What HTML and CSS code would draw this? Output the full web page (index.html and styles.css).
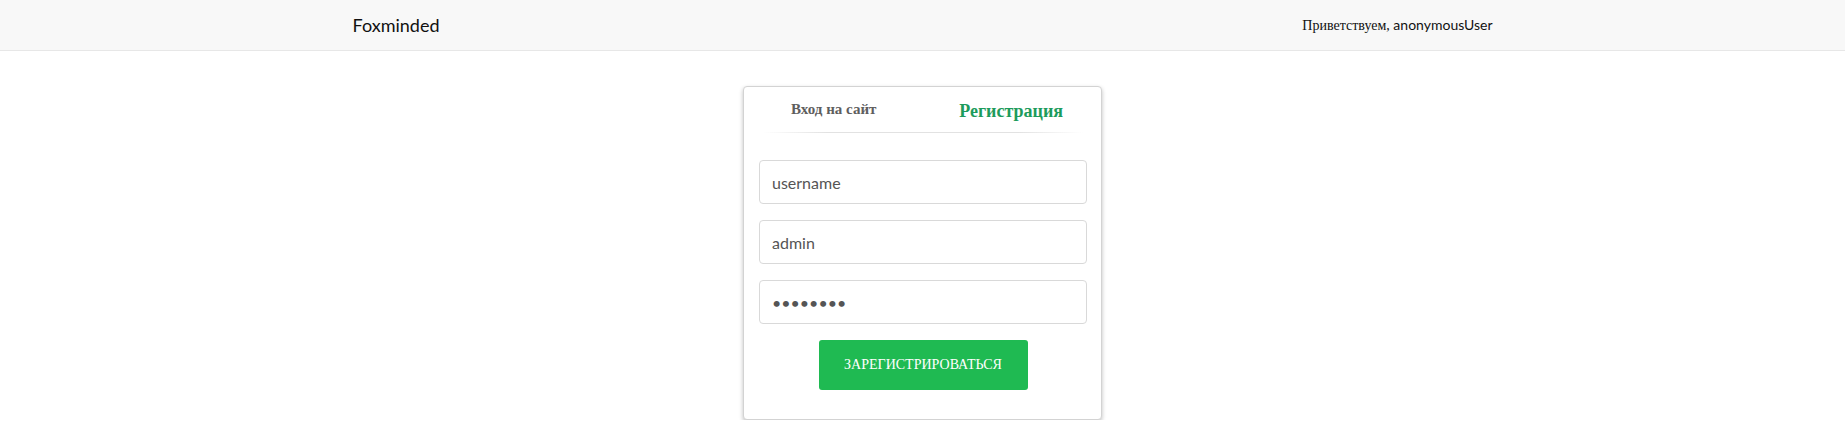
FILE: index.html
```
<!DOCTYPE html>
<html lang="ru">
<head>
<meta charset="utf-8">
<title>Foxminded</title>
<link rel="stylesheet" href="styles.css">
</head>
<body>
<header class="navbar">
  <div class="container">
    <a class="brand" href="#">Foxminded</a>
    <p class="greeting"><span class="serif">Приветствуем,</span> anonymousUser</p>
  </div>
</header>
<main class="page">
  <section class="card">
    <nav class="tabs">
      <a class="tab tab-login" href="#">Вход на сайт</a>
      <a class="tab tab-register" href="#">Регистрация</a>
    </nav>
    <div class="divider"></div>
    <form class="form">
      <input class="field" type="text" value="username">
      <input class="field" type="text" value="admin">
      <input class="field" type="password" value="password">
      <button class="submit" type="button">Зарегистрироваться</button>
    </form>
  </section>
</main>
</body>
</html>
```
FILE: styles.css
```
* { box-sizing: border-box; }
html, body { margin: 0; padding: 0; }
body {
  font-family: Lato, "Liberation Sans", sans-serif;
  font-size: 14px;
  line-height: 20px;
  color: #333;
  background: #fff;
}
.serif { font-family: "Liberation Serif", serif; }
.navbar {
  height: 51px;
  background: #f8f8f8;
  border-bottom: 1px solid #e7e7e7;
}
.container {
  width: 1170px;
  margin: 0 auto;
  padding: 0 15px;
  display: flex;
  justify-content: space-between;
  align-items: flex-start;
}
.brand {
  display: block;
  padding: 15px 0;
  font-size: 18px;
  line-height: 20px;
  color: #111;
  text-decoration: none;
}
.greeting {
  margin: 15px 0;
  font-size: 14px;
  line-height: 20px;
  color: #111;
}
.page {
  display: flex;
  justify-content: center;
  padding-top: 35px;
}
.card {
  width: 359px;
  border: 1px solid #d3d3d3;
  border-radius: 4px;
  box-shadow: 0 2px 4px rgba(0,0,0,0.25);
  background: #fff;
  padding: 12px 0 29px;
}
.tabs {
  display: flex;
  justify-content: space-between;
  align-items: flex-start;
  padding: 0 38px 0 47px;
}
.tab {
  font-family: "Liberation Serif", serif;
  font-weight: bold;
  text-decoration: none;
}
.tab-login {
  font-size: 15px;
  line-height: 20px;
  color: #5e5e5e;
}
.tab-register {
  font-size: 18px;
  line-height: 24px;
  color: #1d9b5c;
}
.divider {
  height: 1px;
  margin: 9px 18px 0 19px;
  background: linear-gradient(to right, rgba(220,220,220,0), #e2e2e2 20%, #e2e2e2 80%, rgba(220,220,220,0));
}
.form {
  display: flex;
  flex-direction: column;
  align-items: center;
  gap: 16px;
  padding: 27px 14px 0 15px;
}
.field {
  width: 100%;
  height: 44px;
  padding: 0 12px;
  border: 1px solid #d9d9d9;
  border-radius: 4px;
  font-family: Lato, "Liberation Sans", sans-serif;
  font-size: 16px;
  color: #555;
  background: #fff;
  outline: none;
}
.submit {
  width: 209px;
  height: 50px;
  border: none;
  border-radius: 3px;
  background: #1fba52;
  color: #fff;
  font-family: "Liberation Serif", serif;
  font-size: 14px;
  text-transform: uppercase;
  cursor: pointer;
}
```
